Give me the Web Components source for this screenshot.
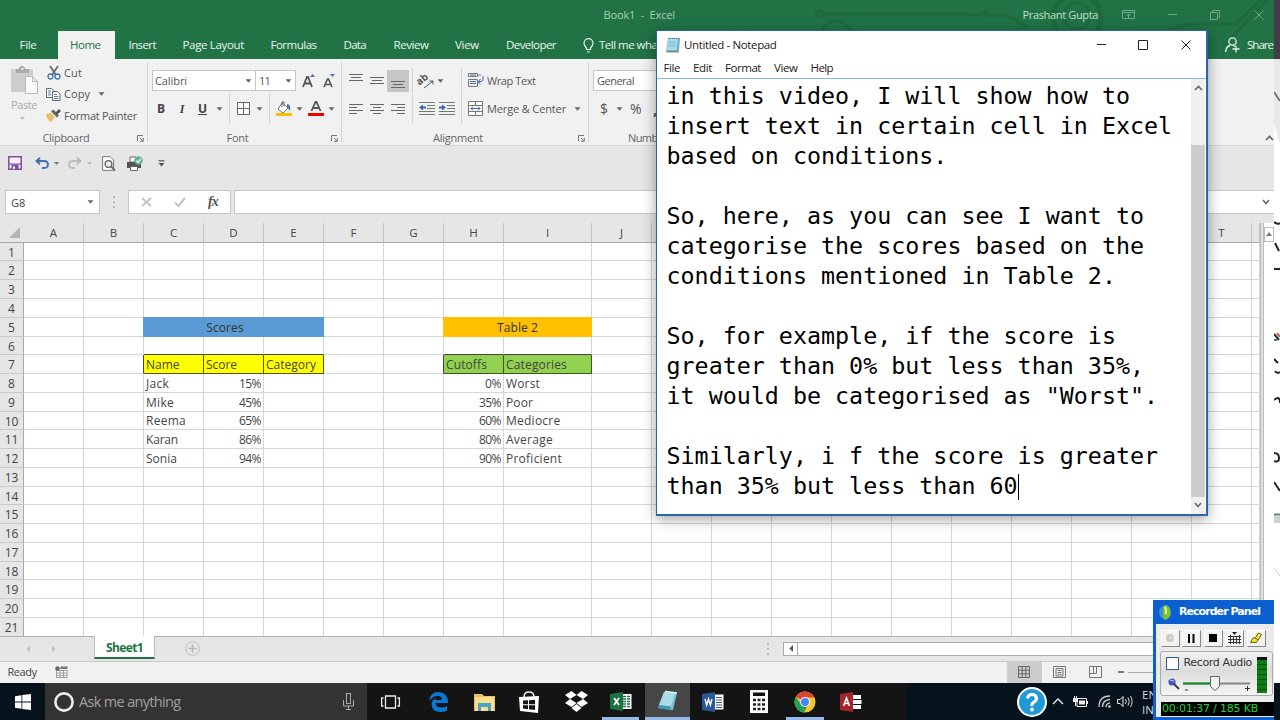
<!DOCTYPE html>
<html lang="en">
<head>
<meta charset="utf-8">
<title>Book1 - Excel</title>
<style>
    body {
        margin: 0;
        width: 1280px;
        height: 720px;
        overflow: hidden;
        background: #fff;
        font: 11px/16px "Open Sans", "Noto Sans", sans-serif;
        color: #444;
    }
</style>
</head>
<body>
<desk-top>
    <excel-window></excel-window>
    <desk-edge slot="edge"></desk-edge>
    <task-bar slot="taskbar"></task-bar>
    <notepad-window slot="windows">in this video, I will show how to
insert text in certain cell in Excel
based on conditions.

So, here, as you can see I want to
categorise the scores based on the
conditions mentioned in Table 2.

So, for example, if the score is
greater than 0% but less than 35%,
it would be categorised as "Worst".

Similarly, i f the score is greater
than 35% but less than 60</notepad-window>
    <recorder-panel slot="windows"></recorder-panel>
</desk-top>

<script>
    // name: [width, height, svg content]
    const icons = {
        down: [7, 4, '<path d="M.5 .3h6L3.5 3.7z" fill="#666"/>'],
        downsmall: [5, 3, '<path d="M0 0h5L2.500 3z" fill="#777"/>'],
        downlight: [5, 3, '<path d="M0 0h5L2.500 3z" fill="#bbb"/>'],
        launcher: [7, 7, '<path d="M.5 6V.5H6M3 3l3 3M6.3 3v3.3H3" fill="none" stroke="#777"/>'],
        paste: [28, 30, '<path d="M0 3h22v7h-8v16H0z" fill="#cfcdcf"/><path d="M5 3h3q0-3 3-3t3 3h4v4H5z" fill="#aaa"/><circle cx="11.500" cy="3" r="1.200" fill="#eee"/><path d="M14.500 10.500h7l5 5v12h-12zM21.500 10.500v5h5" fill="#fafafa" stroke="#b9b9b9"/>'],
        cut: [14, 14, '<path d="M3 0l6 9M11 0L5 9" stroke="#666" stroke-width="1.700"/><circle cx="3.500" cy="10.500" r="2.500" fill="none" stroke="#4472b0" stroke-width="1.300"/><circle cx="10.500" cy="10.500" r="2.500" fill="none" stroke="#4472b0" stroke-width="1.300"/>'],
        copy: [15, 13, '<path d="M.5 .5h5l2 2v7h-7z" fill="#fff" stroke="#666"/><path d="M2 3h3M2 5h3M2 7h3" stroke="#5b86b8"/><path d="M6.500 3.500h5l2.500 2.500v6.500H6.500z" fill="#fff" stroke="#666"/><path d="M8 6.500h3M8 8.500h4.500M8 10.500h4.500" stroke="#5b86b8"/>'],
        painter: [15, 13, '<path d="M0 5l5-1 4 4-4 5q-4-2-5-8z" fill="#e6bd6a"/><path d="M5 2.500l6 6 2-2-5.500-6z" fill="#666"/><path d="M9 4l4-4 2 2-4 4z" fill="#555"/>'],
        grow: [13, 15, '<path d="M1 14L5 4h1l4 10M2.500 10.500h6" fill="none" stroke="#555" stroke-width="1.800"/><path d="M8 4l2.500-3L13 4z" fill="#4472b0"/>'],
        shrink: [12, 15, '<path d="M1 14l3.500-8h1L9 14M2.500 11.500h5" fill="none" stroke="#555" stroke-width="1.600"/><path d="M7 1h5L9.500 4z" fill="#4472b0"/>'],
        borders: [13, 13, '<path d="M.5 .5h12v12H.5zM6.500 .5v12M.5 6.500h12" fill="#fff" stroke="#666"/>'],
        bucket: [16, 15, '<path d="M6 2l6 5-5 5-5-4z" fill="#fff" stroke="#777"/><path d="M6 6V1h2v4" fill="none" stroke="#666"/><path d="M11 3q4 0 3 7l-3-4z" fill="#4472b0"/><path d="M0 12h16v3H0z" fill="#ffbf00"/>'],
        fontcolor: [16, 15, '<path d="M3.500 10l4-9h1l4 9M5 7h6" fill="none" stroke="#555" stroke-width="1.800"/><path d="M0 12h16v3H0z" fill="#f00000"/>'],
        vtop: [14, 14, '<path d="M0 3.500h14M2 6.500h10M0 9.500h14" stroke="#666"/>'],
        vmid: [14, 14, '<path d="M0 3.500h14M2 6.500h10M0 9.500h14" stroke="#666"/>'],
        vbot: [22, 22, '<path d="M0 0h22v22H0z" fill="#c6c6c6"/><path d="M4 11.500h14M6 14.500h10M4 17.500h14" stroke="#666"/>'],
        left: [14, 12, '<path d="M0 1.500h14M0 4.500h8M0 7.500h14M0 10.500h8" stroke="#666"/>'],
        center: [14, 12, '<path d="M0 1.500h14M3 4.500h8M0 7.500h14M3 10.500h8" stroke="#666"/>'],
        right: [14, 12, '<path d="M0 1.500h14M6 4.500h8M0 7.500h14M6 10.500h8" stroke="#666"/>'],
        orient: [17, 14, '<text x="-1" y="8" transform="rotate(-38 5 8)" font-size="10" font-weight="700" fill="#555">ab</text><path d="M5 14L14 7M14 10.500V7h-3.500" fill="none" stroke="#555"/>'],
        outdent: [16, 13, '<path d="M0 .5h16M8 3.500h8M8 6.500h8M0 9.500h16M0 12.500h16" stroke="#777"/><path d="M0 5.500l4-3v2h3v2H4v2z" fill="#3568b0"/>'],
        indent: [16, 13, '<path d="M0 .5h16M8 3.500h8M8 6.500h8M0 9.500h16M0 12.500h16" stroke="#777"/><path d="M7 5.500l-4-3v2H0v2h3v2z" fill="#3568b0"/>'],
        wrap: [16, 15, '<path d="M.5 .5h9v3h-9zM.5 6.500h9v7h-9zM10 2h3" fill="none" stroke="#777"/><path d="M2 8.500h6M2 10.500h6M2 2h6" stroke="#4472b0"/><path d="M15 3v4q0 2-5 2m2.500-3L10 9l2.500 2" fill="none" stroke="#3568b0"/>'],
        merge: [15, 15, '<path d="M.5 .5h14v14H.5zM.5 4.500h14M.5 10.500h14M7.500 .5v4M7.500 10.500v4" fill="#fff" stroke="#777"/><path d="M3 7.500h9M5 5.500l-2 2 2 2M10 5.500l2 2-2 2" fill="none" stroke="#3568b0"/>'],
        bulb: [11, 15, '<path d="M3.500 10Q1 7.500 1 5.200a4.500 4.500 0 0 1 9 0Q10 7.500 7.500 10v1.500h-4zM4 14h3" fill="none" stroke="#e4f0e8" stroke-width="1.200"/>'],
        person: [15, 16, '<circle cx="7.500" cy="4.500" r="3.700" fill="none" stroke="#e8f3ec" stroke-width="1.300"/><path d="M.7 15Q1 9.500 5 8.500M8 8.500l2 1M11 8.500v7M7.500 12h7" fill="none" stroke="#e8f3ec" stroke-width="1.300"/>'],
        ribbonopt: [13, 9, '<path d="M.5 .5h12v8H.5zM.5 2.500h12M6.500 8V4M4.500 6l2-2 2 2" fill="none" stroke="#6fa888"/>'],
        min: [9, 2, '<path d="M0 .5h9" stroke="#6fa888"/>'],
        restore: [10, 10, '<path d="M.5 2.500h7v7h-7zM2.500 2V.5h7v7H8" fill="none" stroke="#6fa888"/>'],
        close: [10, 10, '<path d="M.5 .5l9 9M9.500 .5l-9 9" stroke="#6fa888"/>'],
        save: [14, 14, '<path d="M.8 .8h12.400v12.400H.8z" fill="#f4effa" stroke="#7b4f9f" stroke-width="1.500"/><path d="M1 7.500h12v1.200H1zM3.500 9h7v4.500h-7z" fill="#7b4f9f"/><path d="M5 10.500h2v2.500H5z" fill="#fff"/>'],
        undo: [14, 12, '<path d="M1.500 4H9q4 0 4 3.500T9 11H7M5 .8L1.500 4 5 7.300" fill="none" stroke="#3f6fae" stroke-width="1.900"/>'],
        redo: [14, 12, '<path d="M12.500 4H5Q1 4 1 7.500T5 11h2M9 .8L12.500 4 9 7.300" fill="none" stroke="#bcbcbc" stroke-width="1.900"/>'],
        preview: [14, 15, '<path d="M.6 .6h7.500l3.500 3.500v10.300H.6z" fill="#fff" stroke="#777"/><circle cx="6.500" cy="8" r="3.400" fill="#e4edf5" stroke="#666" stroke-width="1.400"/><path d="M9 10.500l4 4" stroke="#666" stroke-width="1.800"/>'],
        print: [16, 15, '<path d="M0 6h14v6H0z" fill="#555"/><path d="M3 1h6v5H3zM3.500 10.500h7v4h-7z" fill="#fff" stroke="#666"/><circle cx="11.500" cy="4.500" r="4.200" fill="#63b595"/><path d="M9.500 4.500l1.500 1.800 3-3.500" fill="none" stroke="#fff" stroke-width="1.200"/>'],
        custom: [7, 7, '<path d="M.5 .8h6" stroke="#555" stroke-width="1.200"/><path d="M.5 3h6L3.500 6.500z" fill="#555"/>'],
        dots: [2, 12, '<path d="M1 0v2M1 5v2M1 10v2" stroke="#aaa" stroke-width="1.500"/>'],
        cross: [11, 10, '<path d="M1 1l9 8M10 1L1 9" stroke="#c3c3c3" stroke-width="1.700"/>'],
        tick: [12, 10, '<path d="M1 5.500l3.500 3.500L11 1" fill="none" stroke="#c3c3c3" stroke-width="2"/>'],
        chevup: [9, 6, '<path d="M1 5l3.500-3.500L8 5" fill="none" stroke="#666" stroke-width="1.600"/>'],
        chevdown: [8, 6, '<path d="M1 1l3 3.500L7 1" fill="none" stroke="#666" stroke-width="1.500"/>'],
        prev: [4, 6, '<path d="M4 0v6L.5 3z" fill="#bbb"/>'],
        next: [4, 6, '<path d="M0 0v6l3.500-3z" fill="#bbb"/>'],
        prevdark: [4, 7, '<path d="M4 0v7L.3 3.500z" fill="#555"/>'],
        plus: [15, 15, '<circle cx="7.500" cy="7.500" r="6.800" fill="none" stroke="#bfbfbf"/><path d="M3.500 7.500h8M7.500 3.500v8" stroke="#b5b5b5" stroke-width="1.500"/>'],
        macro: [13, 12, '<path d="M1.500 4.500h10.500v7H1.500zM1.500 7h10.500M1.500 9.300h10.500M5 4.500v7M8.500 4.500v7" fill="#fff" stroke="#888" stroke-width=".8"/><circle cx="2.500" cy="2.500" r="2.300" fill="#666"/><path d="M5.500 .5h7V3h-7z" fill="#777"/>'],
        normal: [12, 12, '<path d="M.5 .5h11v11H.5zM.5 4.200h11M.5 7.800h11M4.200 .5v11M7.800 .5v11" fill="none" stroke="#666"/>'],
        pageview: [13, 12, '<path d="M.5 .5h12v11H.5zM3 2.500h7v7.500H3zM4.500 4.500h4M4.500 6.500h4M4.500 8.200h4" fill="none" stroke="#777"/>'],
        breakview: [13, 12, '<path d="M.5 .5h12v11H.5zM.5 7.500h7v-7M4.500 .5v7" fill="none" stroke="#777"/>'],
        notepad: [15, 16, '<path d="M3 1h12l-1 13H1z" fill="#6fb5ca"/><path d="M3.500 2h9.500L11.500 13H1.500z" fill="#a6dbe8"/><path d="M4 5h7M3.500 7h7M3.300 9h7" stroke="#78b7c8" stroke-width=".8"/><path d="M3 1.500h11" stroke="#55747c" stroke-dasharray="1 1"/><path d="M1 14h13l-.5 1.500H2z" fill="#8c8573"/>'],
        npmin: [9, 9, '<path d="M0 4.500h9" stroke="#222"/>'],
        npmax: [10, 10, '<path d="M.5 .5h9v9h-9z" fill="none" stroke="#222"/>'],
        npclose: [10, 10, '<path d="M.5 .5l9 9M9.500 .5l-9 9" stroke="#222"/>'],
        windows: [16, 16, '<path d="M0 2.200L6.500 1.200v6.400H0zM7.300 1.100L16 0v7.600H7.300zM0 8.400h6.500v6.400L0 13.800zM7.300 8.400H16V16l-8.700-1.100z" fill="#fff"/>'],
        cortana: [20, 20, '<circle cx="10" cy="10" r="8.600" fill="none" stroke="#eee" stroke-width="2.600"/>'],
        mic: [11, 17, '<rect x="3.500" y=".5" width="4" height="10" fill="none" stroke="#aaa"/><path d="M.5 7v6h10V7M5.500 13v3M3 16.500h5" fill="none" stroke="#aaa"/>'],
        taskview: [19, 14, '<path d="M4.500 1h10v12h-10zM2.500 3H.6v8h1.900M16.500 3h1.900v8h-1.900" fill="none" stroke="#eee" stroke-width="1.300"/>'],
        edge: [19, 20, '<path d="M0 9Q1 0 10 0q9 1 9 11H6.500q.5 4.500 6 4.500 3 0 5.500-1.500v4.500Q15 20 11.500 20 3 20 2.500 12 3 7.500 7.500 5.500 6 7 6 8h7q0-4-4-4-5 0-9 5z" fill="#0a78d6"/>'],
        folder: [21, 18, '<path d="M0 1h8l2 2h11v15H0z" fill="#e5c068"/><path d="M1 4h19v14H1z" fill="#f8de8e"/><path d="M4 10h13v8h-3v-4H7v4H4z" fill="#49a2c4"/>'],
        store: [20, 22, '<path d="M0 6l20-1-1 17L1 20z" fill="#fff"/><path d="M5 6q0-5 5-5t5 5" fill="none" stroke="#eee" stroke-width="1.500"/><path d="M4 9.500l5-.3v4H4zM10 9.200l6-.4v4.400h-6zM4 14.200h5v4l-5-.6zM10 14.200h6V19l-6-.7z" fill="#151515"/>'],
        dropbox: [23, 21, '<path d="M6.500 0L11.500 4 5 8 0 4zM16.500 0L23 4l-5 4-6.500-4zM0 12l5-4 6.500 4-5 4zM23 12l-5-4-6.500 4 5 4zM11.500 13l5 4-5 4-5-4z" fill="#fff"/>'],
        excel: [22, 19, '<path d="M12 2h9.500v15H12z" fill="#fff"/><path d="M13 4.500h3M17 4.500h3M13 7h3M17 7h3M13 9.500h3M17 9.500h3M13 12h3M17 12h3M13 14.500h3M17 14.500h3" stroke="#207245" stroke-width="1.300"/><path d="M0 2l13-2v19L0 17z" fill="#1e7145"/><path d="M4 6l5 7M9 6l-5 7" stroke="#fff" stroke-width="1.700"/>'],
        notepadbig: [21, 21, '<path d="M7 1l13 1-4 17L1 17z" fill="#79bfcf"/><path d="M7 1l11 1.500-4 13L2 14z" fill="#a9dce6"/><path d="M2 14l12 1.500L13 19 1 17z" fill="#3f9bb5"/><path d="M8 .5l12 1.500" stroke="#dff" stroke-width="1.500"/>'],
        word: [22, 20, '<path d="M12 2.500h9.500v15H12z" fill="#fff"/><path d="M14 5.500h6M14 8h6M14 10.500h6M14 13h6M14 15.500h6" stroke="#2b5797"/><path d="M0 2l13-2v20L0 18z" fill="#2b5797"/><path d="M3 7l1.700 6L6.500 7l1.800 6L10 7" fill="none" stroke="#fff" stroke-width="1.400"/>'],
        calc: [18, 23, '<path d="M0 0h18v23H0z" fill="#fff"/><path d="M3 2.500h12V6H3z" fill="#111"/><path d="M3 10h12M3 14.500h12M3 19h12" stroke="#222" stroke-width="2.300" stroke-dasharray="3 1.500"/>'],
        chrome: [22, 22, '<circle cx="11" cy="11" r="10.500" fill="#f6c52b"/><path d="M11 11L1.900 5.700A10.500 10.500 0 0 1 20.500 6.500H11z" fill="#db4437"/><path d="M1.900 5.700A10.500 10.500 0 0 0 10 21.500l4-8.200-3-2.300-5 1z" fill="#20a25a"/><circle cx="11" cy="11" r="5" fill="#fff"/><circle cx="11" cy="11" r="4" fill="#4285f4"/>'],
        access: [22, 20, '<path d="M12 3h9v4h-9zM12 8h9.500v4H12zM12 13h9v4h-9z" fill="#fff"/><path d="M0 2l13-2v20L0 18z" fill="#a4262c"/><path d="M3.500 14L6.500 6l3 8M4.500 11.500h4" fill="none" stroke="#fff" stroke-width="1.500"/>'],
        help: [30, 30, '<circle cx="15" cy="15" r="14" fill="#1f9ad6" stroke="#fff" stroke-width="2"/><path d="M10.500 11.500Q11 7.500 15 7.500t4.500 3.800Q19.500 13.500 17 15t-2 4" fill="none" stroke="#fff" stroke-width="3"/><circle cx="15" cy="22.500" r="1.900" fill="#fff"/>'],
        trayup: [12, 7, '<path d="M1 6l5-5 5 5" fill="none" stroke="#eee" stroke-width="1.300"/>'],
        battery: [15, 12, '<path d="M4 2.500h9.500v8H4z" fill="none" stroke="#eee"/><path d="M6 4.500h6v4H6zM14 5h1v3h-1zM0 2h5v4H0zM1 0h1v2H1zM3 0h1v2H3zM2 6h1v4H2z" fill="#eee"/>'],
        wifi: [13, 13, '<path d="M1 12Q1 1 12 1M4.500 12Q4.500 5 12 4.500M8 12q0-3.500 4-4" fill="none" stroke="#ccc" stroke-width="1.300"/><circle cx="11.500" cy="11.500" r="1.300" fill="#ccc"/>'],
        volume: [16, 13, '<path d="M.6 4.500h2.500L6 1.500v10L3.100 8.500H.6z" fill="none" stroke="#eee"/><path d="M8.500 4q1.500 2.500 0 5M11 2.500q2.500 4 0 8M13.500 1q3.200 5.500 0 11" fill="none" stroke="#ddd"/>'],
        recball: [13, 15, '<path d="M6 0Q12 1 12 7T6 15Q0 12 0 7T6 0z" fill="#3a92cf"/><path d="M6 0Q11 1 11.500 7T6 15Q4 12 4 7t2-7z" fill="#7cc52a"/><path d="M5.500 2q2.500 2 1 7" fill="none" stroke="#e6f79a" stroke-width="2"/>'],
        rec: [10, 10, '<circle cx="5" cy="5" r="4" fill="#c9c9c9"/><circle cx="5.500" cy="4.500" r="1.500" fill="#e2e2e2"/>'],
        pause: [7, 9, '<path d="M0 0h2v9H0zM4.500 0h2v9h-2z" fill="#000"/>'],
        stop: [8, 8, '<path d="M0 0h8v8H0z" fill="#000"/>'],
        film: [13, 12, '<path d="M0 4.500h13M0 7.500h13M0 10.500h13M2.500 3v9M5.500 4v8M8.500 4v8M11.500 3v9" stroke="#333"/><path d="M4 0h5L6.500 3z" fill="#222"/>'],
        pencil: [12, 12, '<path d="M.5 10.500h6l5-8-3-1.500-3 4.500-2.500.5z" fill="#f1e33c" stroke="#6d6520"/><path d="M5 6l3 2" stroke="#6d6520"/>'],
        recmic: [12, 13, '<circle cx="4" cy="4" r="3.600" fill="#4759b8"/><path d="M2 2l4 1" stroke="#c8d0ff"/><path d="M6 6l5 5" stroke="#334" stroke-width="1.800"/>']
    }

    class UiIcon extends HTMLElement {
        constructor() {
            super()
            this.attachShadow({ mode: 'open' })
        }

        connectedCallback() {
            const [w, h, body] = icons[this.getAttribute('name')]
            this.shadowRoot.innerHTML = `
                <style>
                    :host { display: block; flex: none; width: ${w}px; height: ${h}px; }
                    svg { display: block; overflow: visible; }
                </style>
                <svg width="${w}" height="${h}" viewBox="0 0 ${w} ${h}">${body}</svg>
            `
        }
    }

    // Text that is tracked in or out so that it takes exactly "w" pixels
    class FitLabel extends HTMLElement {
        constructor() {
            super()
            this.attachShadow({ mode: 'open' })
            this.shadowRoot.innerHTML = `
                <style>
                    :host { display: block; flex: none; }
                    span { display: inline-block; white-space: pre; }
                </style>
                <span><slot></slot></span>
            `
        }

        connectedCallback() {
            const w = Number(this.getAttribute('w'))
            const span = this.shadowRoot.querySelector('span')
            const natural = span.getBoundingClientRect().width
            span.style.letterSpacing = (w - natural) / this.textContent.length + 'px'
            this.style.width = w + 'px'
        }
    }

    // Items of a flex row, each given by its start; the gaps become margins
    const text = (x, w, label, style = '') => [x, w, m => `<fit-label w="${w}" style="margin-left:${m}px;${style}">${label}</fit-label>`]
    const icon = (x, name, style = '') => [x, icons[name][0], m => `<ui-icon name="${name}" style="margin-left:${m}px;${style}"></ui-icon>`]
    const box = (x, w, html, cls, style = '') => [x, w, m => `<div class="${cls}" style="margin-left:${m}px;width:${w}px;${style}">${html}</div>`]
    const row = (origin, items) => {
        let pos = origin
        return items.map(([x, w, make]) => {
            const m = x - pos
            pos = x + w
            return make(+m.toFixed(2))
        }).join('')
    }

    const base = `
        * { box-sizing: border-box; }
        .row { display: flex; align-items: center; }
        .sep { align-self: stretch; background: #d2d2d2; flex: none; }
        .combo { display: flex; align-items: center; flex: none; height: 21px; border: 1px solid #c6c6c6; background: #fff; }
    `

    class ExcelTitle extends HTMLElement {
        constructor() {
            super()
            this.attachShadow({ mode: 'open' })
            this.shadowRoot.innerHTML = `
                <style>
                    ${base}
                    :host { display: block; height: 59px; background: #217346; color: #eaf4ee; position: relative; }
                    .art { position: absolute; left: 800px; top: 0; }
                    .row { position: relative; }
                    .title { height: 29px; color: #a9d0b8; }
                    .tabs { height: 28px; margin-top: 2px; font-size: 11.5px; }
                    .active { display: flex; flex: none; height: 28px; align-items: center; background: #f1f1f1; color: #217346; }
                </style>
                <svg class="art" width="474" height="59" fill="none" stroke="#1e6a3f" stroke-width="3">
                    <circle cx="19" cy="14" r="3"/><path d="M23 14h144l12 1h28l20 12"/>
                    <circle cx="36" cy="35" r="14"/><circle cx="185" cy="14" r="2"/>
                    <circle cx="277" cy="18" r="24" stroke-width="5"/><circle cx="277" cy="16" r="13"/>
                    <path d="M370 29l20-5h46l38-38M425 45l44-48"/>
                </svg>
                <div class="row title">${row(0, [
                    text(603.5, 71.5, 'Book1  -  Excel'),
                    text(1022.5, 75.5, 'Prashant Gupta', 'color:#c2dfcd'),
                    icon(1122, 'ribbonopt'), icon(1168, 'min'), icon(1210, 'restore'), icon(1253.5, 'close')
                ])}</div>
                <div class="row tabs">${row(0, [
                    text(19.5, 17, 'File'),
                    box(58, 56.5, '<fit-label w="30.5" style="margin-left:12px">Home</fit-label>', 'active'),
                    text(128.5, 27.5, 'Insert'), text(182.5, 61.5, 'Page Layout'), text(270.5, 46, 'Formulas'),
                    text(343.5, 22.5, 'Data'), text(393.5, 35, 'Review'), text(455, 24, 'View'), text(506, 50, 'Developer'),
                    icon(582.500, 'bulb'), text(599, 62, 'Tell me what'),
                    icon(1225, 'person'), text(1247, 26, 'Share')
                ])}</div>
            `
        }
    }

    class RibbonGroup extends HTMLElement {
        constructor() {
            super()
            this.attachShadow({ mode: 'open' })
            this.shadowRoot.innerHTML = `
                <style>
                    :host { display: flex; flex-direction: column; flex: none; border-right: 1px solid #d5d5d5; height: 80px; margin-top: 3px; box-sizing: border-box; }
                    .body { flex: none; height: 68px; }
                    .foot { display: flex; flex: none; align-items: center; height: 16px; color: #666; }
                    .foot ui-icon { margin-left: auto; margin-right: 3px; }
                </style>
                <div class="body"><slot></slot></div>
                <div class="foot"><slot name="label"></slot><ui-icon name="launcher"></ui-icon></div>
            `
        }
    }

    class ExcelRibbon extends HTMLElement {
        constructor() {
            super()
            this.attachShadow({ mode: 'open' })
            this.shadowRoot.innerHTML = `
                <style>
                    ${base}
                    :host { display: flex; height: 87px; box-sizing: border-box; background: #f1f1f1; border-bottom: 1px solid #d5d5d5; color: #555; }
                    .clip { display: flex; }
                    .paste { display: flex; flex-direction: column; flex: none; width: 46px; padding: 4px 0 0 11px; color: #aaa; }
                    .paste fit-label { margin: 1px 0 4px; }
                    .list .row { height: 21.500px; }
                    .r1 { height: 31px; padding-top: 6px; }
                    .r2 { height: 30px; padding-top: 1px; }
                    .letter { font-weight: 700; font-size: 12px; text-align: center; flex: none; color: #444; }
                    .collapse { margin: 76px 0 0 auto; padding-right: 3px; }
                </style>
                <ribbon-group style="width:148px">
                    <div class="clip">
                        <div class="paste"><ui-icon name="paste"></ui-icon><fit-label w="26">Paste</fit-label><ui-icon name="downlight" style="margin-left:9px"></ui-icon></div>
                        <div class="list">
                            <div class="row">${row(46, [icon(46.5, 'cut'), text(64, 18, 'Cut')])}</div>
                            <div class="row">${row(46, [icon(46, 'copy'), text(64, 26, 'Copy'), icon(98, 'down')])}</div>
                            <div class="row">${row(46, [icon(46, 'painter'), text(64, 73, 'Format Painter')])}</div>
                        </div>
                    </div>
                    <fit-label slot="label" w="47" style="margin-left:42.5px">Clipboard</fit-label>
                </ribbon-group>
                <ribbon-group style="width:194px">
                    <div class="row r1">${row(148, [
                        box(152, 104, '<fit-label w="32" style="margin:0 auto 0 2px">Calibri</fit-label><ui-icon name="down" style="margin-right:3px"></ui-icon>', 'combo'),
                        box(255, 41, '<fit-label w="11" style="margin:0 auto 0 3px">11</fit-label><ui-icon name="down" style="margin-right:3px"></ui-icon>', 'combo'),
                        icon(301.5, 'grow'), icon(323, 'shrink')
                    ])}</div>
                    <div class="row r2">${row(148, [
                        box(156, 10, 'B', 'letter'), box(177, 10, 'I', 'letter', 'font-style:italic;font-family:Liberation Serif'), box(198, 9, 'U', 'letter', 'text-decoration:underline'), icon(215.5, 'down'),
                        box(229, 1, '', 'sep'), icon(237, 'borders'), icon(256, 'down'), box(269, 1, '', 'sep'),
                        icon(276, 'bucket'), icon(296, 'down'), icon(308, 'fontcolor'), icon(328, 'down')
                    ])}</div>
                    <fit-label slot="label" w="22" style="margin-left:78.5px">Font</fit-label>
                </ribbon-group>
                <ribbon-group style="width:247px">
                    <div class="row r1">${row(342, [
                        icon(349, 'vtop', 'margin-top:-6px'), icon(370, 'vmid'), icon(387, 'vbot'), box(412, 1, '', 'sep'),
                        icon(419, 'orient'), icon(436.5, 'down'), box(461, 1, '', 'sep'), icon(468, 'wrap'), text(487, 48.5, 'Wrap Text')
                    ])}</div>
                    <div class="row r2">${row(342, [
                        icon(349, 'left'), icon(370, 'center'), icon(391, 'right'), box(412, 1, '', 'sep'),
                        icon(419, 'outdent'), icon(439, 'indent'), box(461, 1, '', 'sep'), icon(468, 'merge'), text(487, 79, 'Merge &amp; Center'), icon(574, 'down')
                    ])}</div>
                    <fit-label slot="label" w="50" style="margin-left:91px">Alignment</fit-label>
                </ribbon-group>
                <ribbon-group style="width:130px">
                    <div class="row r1">${row(589, [
                        box(593, 100, '<fit-label w="37" style="margin-left:3px">General</fit-label>', 'combo')
                    ])}</div>
                    <div class="row r2">${row(589, [
                        text(600, 7, '$', 'font-size:14px'), icon(615.5, 'down'), text(630, 12, '%', 'font-size:14px'), text(653, 4, ',', 'font-weight:700;font-size:16px')
                    ])}</div>
                    <fit-label slot="label" w="39" style="margin-left:39px">Number</fit-label>
                </ribbon-group>
                <ui-icon class="collapse" name="chevup"></ui-icon>
            `
        }
    }

    class FormulaBar extends HTMLElement {
        constructor() {
            super()
            this.attachShadow({ mode: 'open' })
            this.shadowRoot.innerHTML = `
                <style>
                    ${base}
                    :host { display: block; height: 77px; background: #e6e6e6; }
                    .quick { height: 35px; }
                    .bar { height: 24px; margin-top: 9px; }
                    .bar .combo { height: 24px; }
                </style>
                <div class="row quick">${row(0, [
                    icon(8, 'save'), icon(35, 'undo'), icon(54, 'downsmall'), icon(68, 'redo'), icon(87, 'downlight'),
                    icon(102, 'preview'), icon(127, 'print'), icon(158, 'custom')
                ])}</div>
                <div class="row bar">${row(0, [
                    box(5, 95, '<fit-label w="14.5" style="margin:2px auto 0 5px">G8</fit-label><ui-icon name="down" style="margin-right:5px"></ui-icon>', 'combo'),
                    icon(113, 'dots'),
                    box(128, 103, row(129, [icon(141, 'cross'), icon(174, 'tick'), text(208, 10, 'fx', 'font:italic 700 14px/20px Liberation Serif,serif;color:#555')]), 'combo'),
                    box(234, 1041, '<ui-icon name="chevdown" style="margin:0 4px 0 auto"></ui-icon>', 'combo')
                ])}</div>
            `
        }
    }

    const cells = {
        7: { C: 'Name|33.5', D: 'Score|31', E: 'Category|50', H: 'Cutoffs|41', I: 'Categories|61' },
        8: { C: 'Jack|23', D: '15%|22', H: '0%|16', I: 'Worst|34' },
        9: { C: 'Mike|28', D: '45%|22', H: '35%|22', I: 'Poor|27' },
        10: { C: 'Reema|40', D: '65%|22', H: '60%|22', I: 'Mediocre|54.5' },
        11: { C: 'Karan|32', D: '86%|22', H: '80%|22', I: 'Average|47' },
        12: { C: 'Sonia|31', D: '94%|22', H: '90%|22', I: 'Proficient|56' }
    }

    class SheetGrid extends HTMLElement {
        constructor() {
            super()
            this.attachShadow({ mode: 'open' })
            const cols = [...'ABCDEFGHIJ', ...Array(9).fill(''), 'T', '']
            let html = '<div class="h corner"><svg width="11" height="11"><path d="M11 0v11H0z" fill="#b4b4b4"/></svg></div>'
            html += cols.map(c => `<div class="h">${c}</div>`).join('')
            for (let r = 1; r <= 21; r++) {
                html += `<div class="n">${r}</div>`
                cols.forEach((c, i) => {
                    if (r === 5 && 'DEI'.includes(c) && c) return
                    if (r === 5 && c === 'C') {
                        html += '<div class="c m" style="grid-column:span 3;background:#5b9bd5"><fit-label w="37.5" style="margin-right:17px">Scores</fit-label></div>'
                        return
                    }
                    if (r === 5 && c === 'H') {
                        html += '<div class="c m" style="grid-column:span 2;background:#ffc000"><fit-label w="41">Table 2</fit-label></div>'
                        return
                    }
                    const value = c && cells[r]?.[c]
                    const [label, w] = value ? value.split('|') : []
                    const head = r === 7 && value ? (i < 6 ? ' y' : ' g') : ''
                    const above = r === 6 && cells[7][c] ? ' ab' : ''
                    const before = r === 7 && (c === 'B' || c === 'G') ? ' bl' : ''
                    html += `<div class="c${head}${above}${before}${label?.endsWith('%') ? ' p' : ''}">${label ? `<fit-label w="${w}">${label}</fit-label>` : ''}</div>`
                })
            }
            this.shadowRoot.innerHTML = `
                <style>
                    ${base}
                    :host { display: flex; height: 414px; background: #fff; overflow: hidden; }
                    .grid { display: grid; flex: none; width: 1260px; grid-template-columns: 24px repeat(8, 60px) 88px repeat(11, 60px) 8px; grid-template-rows: 20px repeat(21, 18.780px); font-size: 12px; color: #444; }
                    .h { background: #e6e6e6; border-right: 1px solid #c4c4c4; border-bottom: 1px solid #a8a8a8; text-align: center; line-height: 20px; font-size: 11.500px; }
                    .corner { display: flex; justify-content: flex-end; align-items: flex-end; padding: 0 4px 4px 0; border-right: 0; }
                    .n { background: #e6e6e6; border-right: 1px solid #a8a8a8; border-bottom: 1px solid #c9c9c9; text-align: center; line-height: 20px; }
                    .c { display: flex; align-items: center; border-right: 1px solid #d6d6d6; border-bottom: 1px solid #d6d6d6; padding: 2px 2px 0; min-width: 0; }
                    .p { justify-content: flex-end; }
                    .m { justify-content: center; border: 0; margin-left: -1px; margin-top: -1px; padding-top: 2px; color: #333; }
                    .y { background: #ff0; border-color: #55551a; }
                    .g { background: #92d050; border-color: #3c5a20; }
                    .ab { border-bottom-color: #444; }
                    .bl { border-right-color: #444; }
                    .split { width: 4px; background: #e0e0e0; border: 1px solid #bcbcbc; border-width: 0 1px; }
                    .scroll { flex: 1; background: #fff; padding-top: 4px; }
                    .up { height: 15px; border: 1px solid #bbb; display: grid; place-items: center; }
                </style>
                <div class="grid">${html}</div>
                <div class="split"></div>
                <div class="scroll"><div class="up"><svg width="6" height="4"><path d="M0 4L3 0l3 4z" fill="#777"/></svg></div></div>
            `
        }
    }

    class SheetFooter extends HTMLElement {
        constructor() {
            super()
            this.attachShadow({ mode: 'open' })
            this.shadowRoot.innerHTML = `
                <style>
                    ${base}
                    :host { display: block; height: 47px; }
                    .tabs { height: 26px; background: #e6e6e6; border-top: 1px solid #b0b0b0; border-bottom: 1px solid #c9c9c9; }
                    .sheet { display: flex; flex: none; justify-content: center; align-items: center; align-self: flex-start; height: 23px; margin-top: -1px; padding-top: 4px; background: #fff; border: 1px solid #bbb; border-top: 0; border-bottom: 2px solid #217346; color: #217346; font-weight: 700; font-size: 12px; }
                    .back, .track { display: grid; place-items: center; flex: none; height: 14px; background: #fff; border: 1px solid #ababab; }
                    .status { height: 21px; background: #f1f1f1; }
                    .view { display: grid; place-items: center; flex: none; height: 21px; background: #cdcdcd; }
                </style>
                <div class="row tabs">${row(0, [
                    icon(25.5, 'prev'), icon(52, 'next'),
                    box(94, 61, '<fit-label w="37">Sheet1</fit-label>', 'sheet'),
                    icon(185, 'plus'), icon(767, 'dots'),
                    box(783, 15, '<ui-icon name="prevdark"></ui-icon>', 'back'), box(797, 477, '', 'track')
                ])}</div>
                <div class="row status">${row(0, [
                    text(7.5, 29, 'Ready', 'margin-top:-1px'), icon(54.5, 'macro'),
                    box(1007, 34.5, '<ui-icon name="normal"></ui-icon>', 'view'), icon(1053, 'pageview'), icon(1089, 'breakview'),
                    box(1118, 6, '', '', 'height:2px;background:#777'), box(1128, 50, '', '', 'height:1px;background:#aaa')
                ])}</div>
            `
        }
    }

    class ExcelWindow extends HTMLElement {
        constructor() {
            super()
            this.attachShadow({ mode: 'open' })
            this.shadowRoot.innerHTML = `
                <style>
                    :host { display: flex; flex-direction: column; width: 1274px; height: 683px; overflow: hidden; }
                </style>
                <excel-title></excel-title>
                <excel-ribbon></excel-ribbon>
                <formula-bar></formula-bar>
                <sheet-grid></sheet-grid>
                <sheet-footer></sheet-footer>
            `
        }
    }

    // Slice of the neighbouring screen at the right border
    class DeskEdge extends HTMLElement {
        constructor() {
            super()
            this.attachShadow({ mode: 'open' })
            this.shadowRoot.innerHTML = `
                <style>:host { display: block; width: 6px; height: 683px; overflow: hidden; } svg { display: block; }</style>
                <svg width="6" height="683" fill="none" stroke="#20242c" stroke-width="2">
                    <path d="M0 0h6v683H0z" fill="#fff" stroke="none"/>
                    <path d="M0 0h6v59H0z" fill="#49354e" stroke="none"/>
                    <path d="M3 0v59" stroke="#2c4a3a" stroke-width="6" stroke-dasharray="1 3"/>
                    <path d="M0 59h6v85l-6-20z" fill="#e8e8e8" stroke="none"/>
                    <path d="M0 92l6 9" stroke="#777"/>
                    <path d="M0 222q3 3 6 1M1 243l4 8M0 269h6M0 334l5 6M0 359l4 4M1 371q2 3 5 1M0 400q6-5 6 3M0 453q5 0 5 5t-5 3M0 482l6 9"/>
                    <path d="M0 340h3" stroke="#3b78c0"/><path d="M3 333l3 4" stroke="#bd582d"/>
                    <path d="M0 514.500h6" stroke="#5a8794"/><path d="M0 516h6v7H0z" fill="#d0d0d0" stroke="none"/>
                    <path d="M0 568l6 8" stroke="#ccc" stroke-width="1"/>
                </svg>
            `
        }
    }

    class TaskBar extends HTMLElement {
        constructor() {
            super()
            this.attachShadow({ mode: 'open' })
            const app = (w, name, cls = '') => `<div class="app ${cls}" style="width:${w}px"><ui-icon name="${name}"></ui-icon></div>`
            this.shadowRoot.innerHTML = `
                <style>
                    ${base}
                    :host { display: flex; width: 1280px; height: 37px; background: #07131c; color: #ddd; }
                    .start { display: grid; place-items: center; width: 45px; }
                    .search { width: 322px; background: #333; color: #a0a0a0; font-size: 14.500px; }
                    .apps { display: flex; width: 540px; background: #141414; }
                    .app { display: grid; place-items: center; flex: none; }
                    .run { box-shadow: inset 0 -3px #94b8e8; }
                    .on { background: #464646; }
                    .lang { font-size: 11.500px; line-height: 15px; }
                </style>
                <div class="start"><ui-icon name="windows"></ui-icon></div>
                <div class="row search">${row(45, [icon(53.5, 'cortana'), text(79, 101.5, 'Ask me anything'), icon(343, 'mic')])}</div>
                <div class="apps">
                    ${app(46, 'taskview')}${app(50, 'edge')}${app(42, 'folder')}${app(48, 'store')}${app(46, 'dropbox')}
                    <div style="width:3px"></div>${app(37, 'excel', 'run')}<div style="width:6px"></div>${app(45, 'notepadbig', 'run on')}${app(46, 'word')}${app(46, 'calc')}
                    <div style="width:4px"></div>${app(38, 'chrome', 'run')}<div style="width:4px"></div>${app(46, 'access')}
                </div>
                <div class="row">${row(907, [
                    icon(1016.5, 'help'), icon(1052, 'trayup'), icon(1073, 'battery'), icon(1098, 'wifi'), icon(1117, 'volume'),
                    box(1142, 11, 'EN<br>IN', 'lang')
                ])}</div>
            `
        }
    }

    class NotepadWindow extends HTMLElement {
        constructor() {
            super()
            this.attachShadow({ mode: 'open' })
            this.shadowRoot.innerHTML = `
                <style>
                    ${base}
                    :host { display: flex; flex-direction: column; box-sizing: border-box; position: absolute; left: 656px; top: 30px; width: 552px; height: 486px; border: 1px solid #2a66ae; border-width: 1px 2px 2px 1px; background: #fff; box-shadow: 0 3px 13px rgba(0, 0, 0, .38); color: #222; }
                    .bar { height: 27px; font-size: 11.500px; }
                    .menu { height: 21px; border-bottom: 1px solid #7fbfdc; font-size: 11.500px; }
                    .body { display: flex; flex: 1; min-height: 0; }
                    .text { flex: 1; padding: 2px 0 0 9.500px; font: 23.330px/30px "DejaVu Sans Mono", monospace; color: #000; white-space: pre; overflow: hidden; }
                    .caret { display: inline-block; width: 1px; height: 26px; background: #000; vertical-align: -6px; }
                    .scroll { display: flex; flex-direction: column; align-items: center; width: 14px; margin-right: 1px; background: #f0f0f0; padding: 6px 0; }
                    .thumb { width: 14px; height: 352px; margin: 54px 0 5px; background: #cdcdcd; flex: none; }
                </style>
                <div class="row bar">${row(657, [
                    icon(665, 'notepad'), text(684, 92.5, 'Untitled - Notepad'),
                    icon(1096.5, 'npmin'), icon(1138, 'npmax'), icon(1181, 'npclose')
                ])}</div>
                <div class="row menu">${row(657, [
                    text(663.5, 16.5, 'File'), text(693, 19, 'Edit'), text(725, 36, 'Format'), text(774, 23.5, 'View'), text(810.5, 22.5, 'Help')
                ])}</div>
                <div class="body">
                    <div class="text"><slot></slot><span class="caret"></span></div>
                    <div class="scroll"><ui-icon name="chevup"></ui-icon><div class="thumb"></div><ui-icon name="chevdown"></ui-icon></div>
                </div>
            `
        }
    }

    class RecorderPanel extends HTMLElement {
        constructor() {
            super()
            this.attachShadow({ mode: 'open' })
            this.shadowRoot.innerHTML = `
                <style>
                    ${base}
                    :host { display: block; box-sizing: border-box; position: absolute; left: 1153px; top: 600px; width: 121px; height: 120px; border-left: 3px solid #0b5fd0; border-bottom: 3px solid #0b5fd0; background: #ebebeb; font-family: "DejaVu Sans", sans-serif; }
                    .bar { height: 24px; background: #0b5fd0; color: #fff; font-weight: 700; }
                    .tools { height: 22px; margin-top: 3px; }
                    .btn { display: grid; place-items: center; flex: none; height: 17px; background: #f3f3f3; border: 1px solid #fff; border-right-color: #888; border-bottom-color: #888; }
                    .panel { display: flex; margin: 2px 0 0 4px; width: 113px; height: 45px; border: 1px solid #aaa; border-radius: 3px; background: linear-gradient(#f2f2f2, #dcdcdc 45%, #f5f5f5); }
                    .left { width: 96px; flex: none; }
                    .check { width: 13px; height: 13px; border: 1px solid #35618d; background: #fff; flex: none; }
                    .meter { width: 10px; height: 36px; margin-top: 5px; border-top: 3px solid #111; background: repeating-linear-gradient(#0a7d17 0 4px, #064d0b 4px 5px); }
                    .time { display: flex; align-items: center; margin: 6px 0 0 5px; height: 14px; background: #000; color: #1fd42a; line-height: 14px; }
                </style>
                <div class="row bar">${row(1156, [icon(1159, 'recball'), text(1179, 81, 'Recorder Panel')])}</div>
                <div class="row tools">${row(1156,
                    ['rec', 'pause', 'stop', 'film', 'pencil'].map((n, i) => box(1160.5 + i * 21.5, 19, `<ui-icon name="${n}"></ui-icon>`, 'btn')))}</div>
                <div class="panel">
                    <div class="left">
                        <div class="row" style="height:22px">${row(1161, [box(1166, 13, '', 'check'), text(1183.5, 68.5, 'Record Audio', 'color:#333')])}</div>
                        <div class="row" style="height:20px">${row(1161, [icon(1168, 'recmic'), [1183, 68, m => `
                            <svg style="margin-left:${m}px;flex:none" width="68" height="18">
                                <path d="M0 8.500h67" stroke="#888" stroke-width="2"/><path d="M0 8.500h30" stroke="#15912a" stroke-width="2"/>
                                <path d="M27.500 1.500h9v10l-4.500 4-4.500-4z" fill="#f2f2f2" stroke="#666"/>
                                <path d="M2 15h3M62 13.500h5M64.500 11v5" stroke="#333"/>
                            </svg>`]])}</div>
                    </div>
                    <div class="meter"></div>
                </div>
                <div class="time"><fit-label w="96" style="margin-left:1px">00:01:37 / 185 KB</fit-label></div>
            `
        }
    }

    class DeskTop extends HTMLElement {
        constructor() {
            super()
            this.attachShadow({ mode: 'open' })
            this.shadowRoot.innerHTML = `
                <style>
                    :host { display: block; position: relative; width: 1280px; height: 720px; overflow: hidden; }
                    .main { display: flex; height: 683px; }
                </style>
                <div class="main"><slot></slot><slot name="edge"></slot></div>
                <slot name="taskbar"></slot>
                <slot name="windows"></slot>
            `
        }
    }

    customElements.define('ui-icon', UiIcon)
    customElements.define('desk-top', DeskTop)
    customElements.define('desk-edge', DeskEdge)
    customElements.define('excel-window', ExcelWindow)
    customElements.define('excel-title', ExcelTitle)
    customElements.define('excel-ribbon', ExcelRibbon)
    customElements.define('ribbon-group', RibbonGroup)
    customElements.define('formula-bar', FormulaBar)
    customElements.define('sheet-grid', SheetGrid)
    customElements.define('sheet-footer', SheetFooter)
    customElements.define('task-bar', TaskBar)
    customElements.define('notepad-window', NotepadWindow)
    customElements.define('recorder-panel', RecorderPanel)
    // last, as it measures text that must already be laid out
    customElements.define('fit-label', FitLabel)
</script>
</body>
</html>
